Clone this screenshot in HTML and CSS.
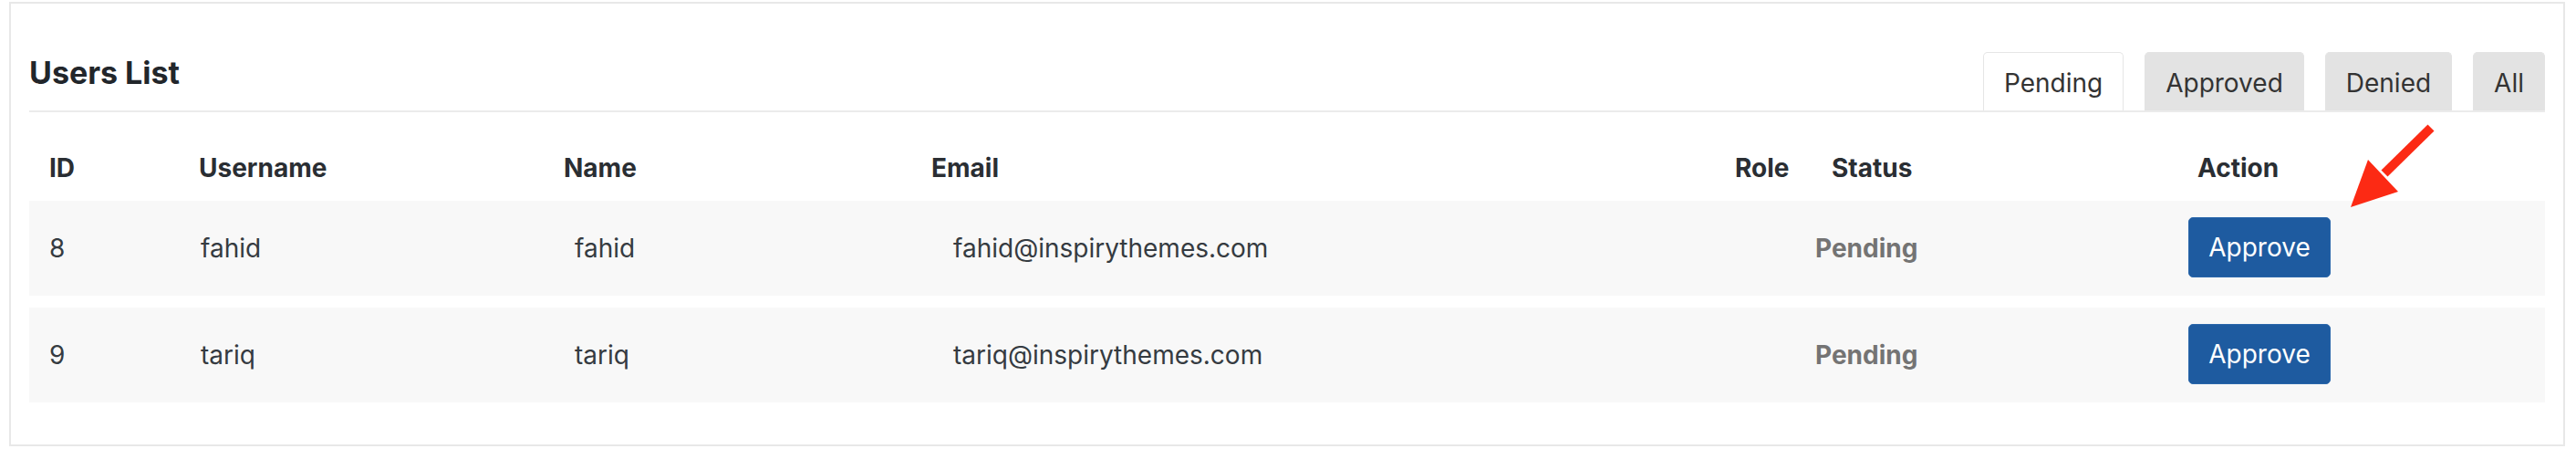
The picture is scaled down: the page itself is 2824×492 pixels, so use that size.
FILE: index.html
```html
<!DOCTYPE html>
<html lang="en">
<head>
<meta charset="utf-8">
<title>Users List</title>
<link rel="stylesheet" href="styles.css">
</head>
<body>
<div class="card">
  <div class="card-head">
    <h2 class="title">Users List</h2>
    <div class="tabs">
      <button class="tab active">Pending</button>
      <button class="tab">Approved</button>
      <button class="tab">Denied</button>
      <button class="tab">All</button>
    </div>
  </div>
  <div class="users">
    <div class="row head">
      <div class="cell c-id">ID</div>
      <div class="cell c-user">Username</div>
      <div class="cell c-name">Name</div>
      <div class="cell c-email">Email</div>
      <div class="cell c-role">Role</div>
      <div class="cell c-status">Status</div>
      <div class="cell c-action">Action</div>
    </div>
    <div class="row item">
      <div class="cell c-id">8</div>
      <div class="cell c-user">fahid</div>
      <div class="cell c-name">fahid</div>
      <div class="cell c-email">fahid@inspirythemes.com</div>
      <div class="cell c-role"></div>
      <div class="cell c-status"><span class="status">Pending</span></div>
      <div class="cell c-action"><button class="approve">Approve</button></div>
    </div>
    <div class="row item">
      <div class="cell c-id">9</div>
      <div class="cell c-user">tariq</div>
      <div class="cell c-name">tariq</div>
      <div class="cell c-email">tariq@inspirythemes.com</div>
      <div class="cell c-role"></div>
      <div class="cell c-status"><span class="status">Pending</span></div>
      <div class="cell c-action"><button class="approve">Approve</button></div>
    </div>
  </div>
</div>
<svg class="arrow" width="105" height="100" viewBox="0 0 105 100" aria-hidden="true">
  <line x1="95" y1="8" x2="44" y2="58" stroke="#fc2a14" stroke-width="10"/>
  <polygon points="26,43 59,78 7,95" fill="#fc2a14"/>
</svg>
</body>
</html>
```

FILE: styles.css
```css
* {
  box-sizing: border-box;
}

html, body {
  margin: 0;
  padding: 0;
  background: #ffffff;
}

body {
  position: relative;
  font-family: "Inter", "Liberation Sans", sans-serif;
  color: #343a40;
}

.card {
  margin: 2px 12px 0 10px;
  border: 2px solid #e8e8e8;
  padding: 0 20px 46px 20px;
  background: #ffffff;
}

.card-head {
  display: flex;
  justify-content: space-between;
  align-items: flex-start;
  padding-top: 53px;
  border-bottom: 2px solid #ebebeb;
}

.title {
  margin: 2px 0 0 0;
  font-size: 34px;
  line-height: 41px;
  font-weight: 700;
  color: #22262b;
}

.tabs {
  display: flex;
  gap: 23px;
}

.tab {
  height: 64px;
  padding: 2px 22px 0 22px;
  border: 1px solid #e3e3e3;
  border-bottom: none;
  border-radius: 5px 5px 0 0;
  background: #e3e3e3;
  font-family: "Inter", "Liberation Sans", sans-serif;
  font-size: 28px;
  line-height: 34px;
  color: #333333;
}

.tab.active {
  background: #ffffff;
  border-color: #e6e6e6;
}

.users {
  display: flex;
  flex-direction: column;
  gap: 13px;
}

.row {
  display: grid;
  grid-template-columns: 186px 400px 403px 881px 88px 409px 391px;
}

.row.head {
  padding: 44px 0 6px 0;
  font-size: 28px;
  line-height: 34px;
  font-weight: 700;
  color: #2a2e33;
}

.row.item {
  height: 104px;
  align-items: center;
  background: #f8f8f8;
  font-size: 28px;
  line-height: 34px;
  color: #353b41;
}

.cell {
  white-space: nowrap;
}

.c-id {
  padding-left: 22px;
}

.item .c-user {
  padding-left: 2px;
}

.item .c-name {
  padding-left: 12px;
}

.item .c-email {
  padding-left: 24px;
}

.head .c-status {
  padding-left: 18px;
}

.head .c-action {
  padding-left: 10px;
}

.status {
  font-weight: 700;
  color: #747474;
}

.approve {
  display: block;
  width: 156px;
  height: 66px;
  padding: 0;
  margin-top: -2px;
  border: 1px solid #2a67ab;
  border-radius: 5px;
  background: #1e5ba0;
  font-family: "Inter", "Liberation Sans", sans-serif;
  font-size: 28px;
  line-height: 34px;
  color: #ffffff;
}

.arrow {
  position: absolute;
  left: 2570px;
  top: 132px;
}
```
